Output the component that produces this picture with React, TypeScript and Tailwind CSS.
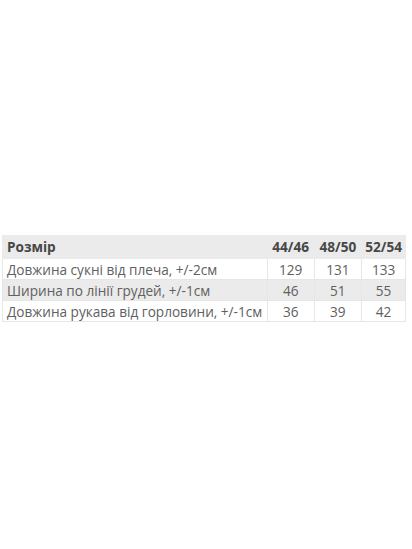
export default function App() {
  const rows = [
    ["Довжина сукні від плеча, +/-2см", "129", "131", "133"],
    ["Ширина по лінії грудей, +/-1см", "46", "51", "55"],
    ["Довжина рукава від горловини, +/-1см", "36", "39", "42"],
  ];
  return (
    <div
      className="w-[412px] h-[549px] bg-white pt-[235px] pl-[2px]"
      style={{ fontFamily: '"Open Sans", "DejaVu Sans", sans-serif' }}
    >
      <table className="border-collapse w-[404px] text-[13.6px] text-[#606060]">
        <colgroup>
          <col className="w-[265px]" />
          <col className="w-[47px]" />
          <col className="w-[48px]" />
          <col className="w-[44px]" />
        </colgroup>
        <thead>
          <tr className="bg-[#ebebeb] h-[23px] text-[#474747] font-bold">
            <th className="text-left pl-[4px] font-bold border border-[#ebebeb]">Розмір</th>
            <th className="text-center font-bold border border-[#ebebeb]">44/46</th>
            <th className="text-center font-bold border border-[#ebebeb]">48/50</th>
            <th className="text-center font-bold border border-[#ebebeb]">52/54</th>
          </tr>
        </thead>
        <tbody>
          {rows.map((r, i) => (
            <tr key={i} className={i % 2 === 1 ? "bg-[#ebebeb] h-[21px]" : "bg-white h-[21px]"}>
              <td className="text-left pl-[4px] border border-[#e6e6e6] whitespace-nowrap leading-[19px]">{r[0]}</td>
              <td className="text-center border border-[#e6e6e6] leading-[19px]">{r[1]}</td>
              <td className="text-center border border-[#e6e6e6] leading-[19px]">{r[2]}</td>
              <td className="text-center border border-[#e6e6e6] leading-[19px]">{r[3]}</td>
            </tr>
          ))}
        </tbody>
      </table>
    </div>
  );
}
